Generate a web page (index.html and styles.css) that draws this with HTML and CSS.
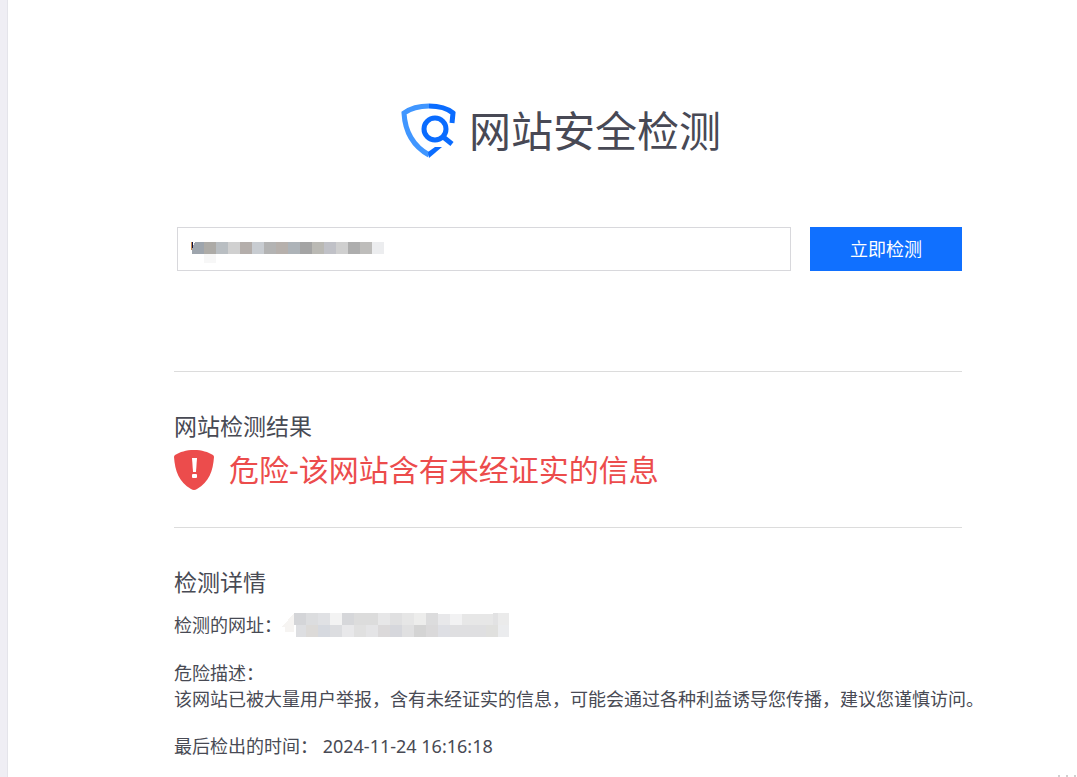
FILE: index.html
```html
<!DOCTYPE html>
<html lang="zh-CN">
<head>
    <meta charset="UTF-8">
    <meta name="viewport" content="width=device-width, initial-scale=1.0">
    <title>网站安全检测</title>
    <link rel="stylesheet" href="styles.css">
</head>
<body>
    <main>
        <header>
            <svg class="logo" viewBox="0 0 56 56" aria-hidden="true">
                <path d="M28 3 C20 3 10 5 3 10 C4 28 12 43 28 52" fill="none" stroke="#4096ff" stroke-width="5"/>
                <path d="M28 3 C36 3 46 5 52 10 L51 20" fill="none" stroke="#0a6cff" stroke-width="5"/>
                <path d="M27 49 L34 44 H41 L28 55 Z" fill="#0a6cff"/>
                <circle cx="34" cy="26" r="11" fill="none" stroke="#0a6cff" stroke-width="5"/>
                <path d="M41 33 L51 41" stroke="#0a6cff" stroke-width="5"/>
            </svg>
            <h1>网站安全检测</h1>
        </header>

        <form id="check-form">
            <div class="field">
                <input type="text" id="url" name="url" aria-label="网址">
                <svg class="mask" width="196" height="40" shape-rendering="crispEdges" aria-hidden="true">
                    <rect x="0" y="1" width="1" height="8" fill="#c98a50"/>
                    <rect x="1" y="1" width="1" height="6" fill="#101040"/>
                    <path d="M1 13 V8 L4 1 H13 V13 Z" fill="#9ea5ad"/>
                    <rect x="13" y="1" width="12" height="12" fill="#adaba7"/>
                    <rect x="25" y="1" width="12" height="12" fill="#b9bec2"/>
                    <rect x="37" y="1" width="12" height="12" fill="#d0d0d0"/>
                    <rect x="49" y="1" width="12" height="12" fill="#b4aeab"/>
                    <rect x="61" y="1" width="12" height="12" fill="#c8ccd1"/>
                    <rect x="73" y="1" width="12" height="12" fill="#b3b3b3"/>
                    <rect x="85" y="1" width="12" height="12" fill="#b6b0ac"/>
                    <rect x="97" y="1" width="12" height="12" fill="#adb3b8"/>
                    <rect x="109" y="1" width="12" height="12" fill="#a4a4a4"/>
                    <rect x="121" y="1" width="12" height="12" fill="#bab9b4"/>
                    <rect x="133" y="1" width="12" height="12" fill="#c0c1c7"/>
                    <rect x="145" y="1" width="12" height="12" fill="#cfcfcf"/>
                    <rect x="157" y="1" width="12" height="12" fill="#adadad"/>
                    <rect x="169" y="1" width="12" height="12" fill="#bebdbb"/>
                    <rect x="181" y="1" width="12" height="12" fill="#ecedef"/>
                    <rect x="13" y="13" width="12" height="9" fill="#f7f7f7"/>
                </svg>
            </div>
            <button type="submit">立即检测</button>
        </form>

        <section id="result">
            <h2>网站检测结果</h2>
            <div class="alert">
                <svg viewBox="0 0 40 42" aria-hidden="true">
                    <path d="M20 1 C28 1 34 3 39 6 Q40 7 40 8 C39 22 35 33 23 40 Q20 42 17 40 C5 33 1 22 0 8 Q0 7 1 6 C6 3 12 1 20 1 Z" fill="#ec4c4c"/>
                    <path d="M18 9 H23 L22 23 H19 Z" fill="#fff"/>
                    <rect x="18" y="25" width="5" height="4" rx="1" fill="#fff"/>
                </svg>
                <strong>危险-该网站含有未经证实的信息</strong>
            </div>
        </section>

        <section id="details">
            <h2>检测详情</h2>
            <p class="site">检测的网址：
                <svg class="mask" width="227" height="24" shape-rendering="crispEdges" role="img" aria-label="网址已隐藏">
                    <path d="M0 14 L12 0 V19 H3 V14 Z" fill="#f6f4f2"/>
                    <rect x="12" y="0" width="12" height="12" fill="#d4d5d8"/>
                    <rect x="24" y="0" width="12" height="12" fill="#dcdddf"/>
                    <rect x="36" y="0" width="12" height="12" fill="#e0e1e4"/>
                    <rect x="48" y="0" width="12" height="12" fill="#f3f3f3"/>
                    <rect x="60" y="0" width="12" height="12" fill="#d6d7da"/>
                    <rect x="72" y="0" width="24" height="12" fill="#dcdcdc"/>
                    <rect x="96" y="0" width="12" height="12" fill="#e7e7e8"/>
                    <rect x="108" y="0" width="12" height="12" fill="#e0e0e1"/>
                    <rect x="120" y="0" width="12" height="12" fill="#e6e6e6"/>
                    <rect x="132" y="0" width="12" height="12" fill="#ededec"/>
                    <rect x="144" y="0" width="12" height="12" fill="#dcdcdd"/>
                    <rect x="156" y="1" width="12" height="11" fill="#e8e8ea"/>
                    <rect x="168" y="1" width="12" height="11" fill="#f2f2f3"/>
                    <rect x="180" y="1" width="32" height="11" fill="#e7e7e7"/>
                    <rect x="211" y="0" width="5" height="12" fill="#e2e2e3"/>
                    <rect x="216" y="0" width="11" height="12" fill="#ebebeb"/>
                    <rect x="14" y="12" width="10" height="12" fill="#dddee1"/>
                    <rect x="24" y="12" width="12" height="12" fill="#dcdad8"/>
                    <rect x="36" y="12" width="12" height="12" fill="#d6d9df"/>
                    <rect x="48" y="12" width="12" height="12" fill="#dcdde0"/>
                    <rect x="60" y="12" width="12" height="12" fill="#e8e8ea"/>
                    <rect x="72" y="12" width="12" height="12" fill="#e0e0e0"/>
                    <rect x="84" y="12" width="12" height="12" fill="#e4e4e6"/>
                    <rect x="96" y="12" width="12" height="12" fill="#dbd9da"/>
                    <rect x="108" y="12" width="12" height="12" fill="#d6d7dc"/>
                    <rect x="120" y="12" width="12" height="12" fill="#e0e0e1"/>
                    <rect x="132" y="12" width="12" height="12" fill="#d4d4d4"/>
                    <rect x="144" y="12" width="12" height="12" fill="#dad9da"/>
                    <rect x="156" y="12" width="12" height="12" fill="#dedfe4"/>
                    <rect x="168" y="12" width="36" height="12" fill="#dfdfe1"/>
                    <rect x="204" y="12" width="12" height="12" fill="#e0e0de"/>
                    <rect x="216" y="12" width="11" height="12" fill="#ebecee"/>
                </svg>
            </p>
            <p class="desc">危险描述：<br>该网站已被大量用户举报，含有未经证实的信息，可能会通过各种利益诱导您传播，建议您谨慎访问。</p>
            <p>最后检出的时间： <time datetime="2024-11-24T16:16:18">2024-11-24 16:16:18</time></p>
        </section>
    </main>
    <svg class="corner" width="20" height="2" aria-hidden="true">
        <path d="M1 1 H3 M9 1 H11 M17 1 H19" stroke="#d0d0d0" stroke-width="2"/>
    </svg>
</body>
</html>
```
FILE: styles.css
```css
* {
    box-sizing: border-box;
}
body {
    font-family: "Noto Sans", "Noto Sans CJK SC", sans-serif;
    font-size: 18px;
    line-height: 26px;
    background-color: #fff;
    color: #484a54;
    margin: 0;
    min-height: 100vh;
    border-left: 7px solid #efeef4;
}
main {
    min-height: 100vh;
    padding: 100px 115px 16px 166px;
    border-left: 1px solid #e4e4ea;
}
header {
    display: flex;
    justify-content: center;
    align-items: center;
    gap: 12px;
    height: 62px;
    padding-right: 14px;
    margin-bottom: 65px;
}
.logo {
    width: 56px;
    height: 56px;
}
h1, h2, p {
    margin: 0;
    font-weight: 400;
}
h1 {
    font-size: 42px;
    line-height: 60px;
    color: #484955;
}
h2 {
    font-size: 23px;
    line-height: 32px;
}
form {
    display: flex;
    gap: 19px;
    padding-left: 3px;
    margin-bottom: 100px;
}
.field {
    position: relative;
    flex: 1;
}
input {
    display: block;
    width: 100%;
    height: 44px;
    padding: 0 14px;
    border: 1px solid #d8d8dc;
    font: inherit;
    color: inherit;
}
input:focus {
    border-color: #1070ff;
    outline: none;
}
.field .mask {
    position: absolute;
    left: 14px;
    top: 14px;
    pointer-events: none;
}
button {
    width: 152px;
    height: 44px;
    padding: 0;
    border: none;
    background-color: #1070ff;
    color: #fff;
    font: inherit;
    cursor: pointer;
}
section {
    padding: 38px 0 29px;
    border-top: 1px solid #dcdcdc;
}
.alert {
    display: flex;
    align-items: center;
    gap: 15px;
    height: 56px;
    color: #ec4c4c;
}
.alert svg {
    width: 40px;
    height: 42px;
}
.alert strong {
    font-size: 30px;
    line-height: 44px;
    font-weight: 400;
}
#details {
    padding-bottom: 0;
}
.site {
    display: flex;
    align-items: center;
    margin-top: 14px;
}
.desc {
    margin: 22px 0 21px;
    white-space: nowrap;
}
.corner {
    position: absolute;
    right: 0;
    bottom: 0;
}
```
